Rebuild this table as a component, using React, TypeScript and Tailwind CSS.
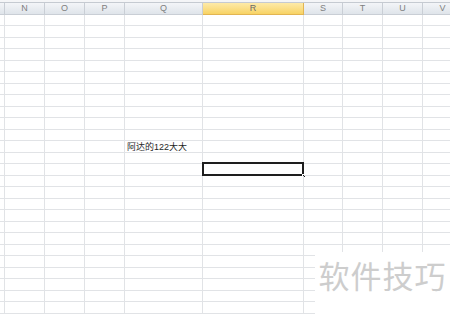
import React from 'react';

const columns = [
  { label: '', width: 'w-[5px]' },
  { label: 'N', width: 'w-[40px]' },
  { label: 'O', width: 'w-[40px]' },
  { label: 'P', width: 'w-[40px]' },
  { label: 'Q', width: 'w-[78px]' },
  { label: 'R', width: 'w-[101px]' },
  { label: 'S', width: 'w-[39px]' },
  { label: 'T', width: 'w-[40px]' },
  { label: 'U', width: 'w-[40px]' },
  { label: 'V', width: 'w-[40px]' },
];

const ROW_COUNT = 26;
const TEXT_ROW = 11;
const SELECTED_ROW = 13;
const SELECTED_COL = 5;

function HeaderRow() {
  return (
    <div className="flex h-[13px] border-t border-[#c5cad1]">
      {columns.map((col, i) => (
        <div
          key={i}
          className={
            i === SELECTED_COL
              ? `${col.width} shrink-0 flex items-center justify-center border-r border-b border-[#e2b552] bg-gradient-to-b from-[#fdeaa8] to-[#f8d363] text-[9px] leading-none text-[#6a6a6a]`
              : `${col.width} shrink-0 flex items-center justify-center border-r border-b border-[#c9ced5] bg-gradient-to-b from-[#f3f5f8] to-[#dfe4ea] text-[9px] leading-none text-[#808080]`
          }
        >
          {col.label}
        </div>
      ))}
    </div>
  );
}

function Cell({ row, col }: { row: number; col: number }) {
  const isText = row === TEXT_ROW && col === 4;
  const isSelected = row === SELECTED_ROW && col === SELECTED_COL;
  return (
    <div className={`${columns[col].width} shrink-0 relative flex items-end pl-[2px] border-r border-b border-[#e1e3e6]`}>
      {isText && (
        <span className="whitespace-nowrap text-[9px] leading-[10px] text-[#1f1f1f]">阿达的122大大</span>
      )}
      {isSelected && (
        <>
          <div className="absolute -left-px -top-[2px] -right-px -bottom-px border-2 border-[#1e1e1e]" />
          <div className="absolute -right-[3px] -bottom-[3px] w-[4px] h-[4px] bg-[#1e1e1e] border border-white" />
        </>
      )}
    </div>
  );
}

export default function App() {
  return (
    <div
      className="relative w-[450px] h-[316px] overflow-hidden bg-white"
      style={{ fontFamily: '"Liberation Sans", "Noto Sans CJK SC", sans-serif' }}
    >
      <div className="h-[2px] bg-[#f4f5f7]" />
      <HeaderRow />
      {Array.from({ length: ROW_COUNT }).map((_, r) => (
        <div key={r} className={r === 0 ? 'flex h-[11px]' : 'flex h-[11.5px]'}>
          {columns.map((_, c) => (
            <Cell key={c} row={r} col={c} />
          ))}
        </div>
      ))}

      {/* watermark */}
      <div className="absolute right-0 bottom-0 w-[135px] h-[64px] bg-white flex items-start justify-center pt-[1px]">
        <span
          className="text-[31px] leading-[44px] tracking-[1px] text-[#cdcdcd]"
          style={{ fontFamily: '"Noto Sans CJK SC", sans-serif' }}
        >
          软件技巧
        </span>
      </div>
    </div>
  );
}
